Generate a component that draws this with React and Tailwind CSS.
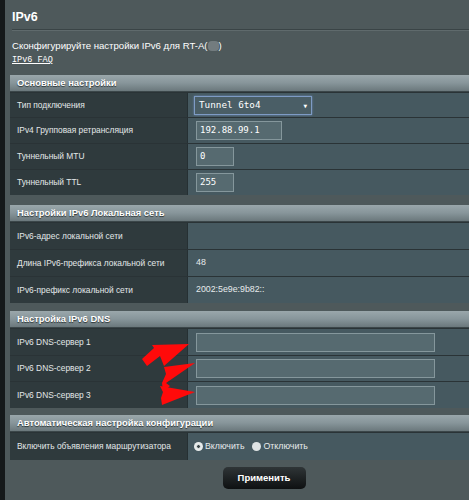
import React from "react";

const font = { fontFamily: '"Liberation Sans", Arial, sans-serif' };

function Header({ children }) {
  return (
    <div className="h-[17px] flex items-center pl-[7px] bg-gradient-to-b from-[#9aa7ab] via-[#87959a] to-[#6b787c] border-b border-[#3b4649] text-[9.4px] font-bold text-white whitespace-nowrap [text-shadow:0_1px_1px_#2a3335]">
      {children}
    </div>
  );
}

function Row({ label, children, h = "h-[26px]" }) {
  return (
    <div className={`flex ${h} border-t border-[#2a3336] first:border-t-0`}>
      <div className="w-[178px] shrink-0 bg-[#2f3a3d] flex items-center pl-[7px] text-[8.4px] text-[#e3e8e9] whitespace-nowrap border-r border-[#263033]">
        {label}
      </div>
      <div className="flex-1 bg-[#465960] flex items-center pl-[8px] text-[8.8px] text-[#e6ebec] whitespace-nowrap">
        {children}
      </div>
    </div>
  );
}

function Input({ w, value }) {
  return (
    <div className={`${w} h-[19px] border border-[#85979c] bg-[#566a70] flex items-center pl-[3px] text-[9px] text-white`} style={{ fontFamily: '"DejaVu Sans Mono", monospace' }}>
      {value}
    </div>
  );
}

export default function App() {
  return (
    <div className="w-[469px] h-[500px] overflow-hidden flex bg-[#4e595b] relative" style={font}>
      <div className="w-[5px] shrink-0 bg-[#15191a]" />
      <div className="flex-1 flex flex-col">
        <div className="pl-[7px] pt-[10px] h-[29px] text-[12.5px] font-bold text-white leading-[15px]">IPv6</div>
        <div className="ml-[7px] h-[2px] bg-[#3a4446] border-b border-[#5f6a6c]" />
        <div className="pl-[7px] mt-[8px] text-[9.6px] text-white leading-[14px] whitespace-nowrap">
          Сконфигурируйте настройки IPv6 для RT-A(<span className="inline-block w-[11px] h-[10px] bg-[#8c9598] align-middle rounded-sm opacity-60" />)
        </div>
        <div className="pl-[7px] text-[8.5px] text-white underline leading-[14px]" style={{ fontFamily: '"Liberation Mono", monospace' }}>IPv6 FAQ</div>

        <div className="ml-[5px] mt-[8px] flex flex-col">
          <Header>Основные настройки</Header>
          <Row label="Тип подключения" h="h-[25px]">
            <div className="w-[118px] h-[19px] -ml-[2px] border border-[#7e9bc4] bg-[#4a5e66] flex items-center justify-between px-[4px] text-[9.3px] text-white shadow-[0_0_2px_#6a8ab8]" style={{ fontFamily: '"DejaVu Sans Mono", monospace' }}>
              <span>Tunnel 6to4</span>
              <span className="text-[6px]">▼</span>
            </div>
          </Row>
          <Row label="IPv4 Групповая ретрансляция">
            <Input w="w-[86px]" value="192.88.99.1" />
          </Row>
          <Row label="Туннельный MTU">
            <Input w="w-[38px]" value="0" />
          </Row>
          <Row label="Туннельный TTL">
            <Input w="w-[38px]" value="255" />
          </Row>
        </div>

        <div className="ml-[5px] mt-[10px] flex flex-col">
          <Header>Настройки IPv6 Локальная сеть</Header>
          <Row label="IPv6-адрес локальной сети" h="h-[27px]" />
          <Row label="Длина IPv6-префикса локальной сети" h="h-[27px]">48</Row>
          <Row label="IPv6-префикс локальной сети" h="h-[27px]">2002:5e9e:9b82::</Row>
        </div>

        <div className="ml-[5px] mt-[8px] flex flex-col">
          <Header>Настройка IPv6 DNS</Header>
          <Row label="IPv6 DNS-сервер 1" h="h-[27px]"><Input w="w-[239px]" value="" /></Row>
          <Row label="IPv6 DNS-сервер 2"><Input w="w-[239px]" value="" /></Row>
          <Row label="IPv6 DNS-сервер 3" h="h-[27px]"><Input w="w-[239px]" value="" /></Row>
        </div>

        <div className="ml-[5px] mt-[7px] flex flex-col">
          <Header>Автоматическая настройка конфигурации</Header>
          <Row label="Включить объявления маршрутизатора" h="h-[28px]">
            <div className="flex items-center gap-[2px] -ml-[2px]">
              <span className="w-[9px] h-[9px] rounded-full bg-[#e8ecec] flex items-center justify-center">
                <span className="w-[5px] h-[5px] rounded-full bg-[#3a4548] border border-[#e8ecec]" />
              </span>
              <span className="mr-[6px]">Включить</span>
              <span className="w-[9px] h-[9px] rounded-full bg-[#dfe4e5]" />
              <span>Отключить</span>
            </div>
          </Row>
        </div>

        <div className="flex justify-center mt-[7px]">
          <div className="ml-[54px] w-[83px] h-[22px] rounded-[5px] bg-gradient-to-b from-[#2f3537] to-[#0e1112] flex items-center justify-center text-[9.5px] font-bold text-white">
            Применить
          </div>
        </div>
      </div>

      <svg className="absolute left-0 top-0 pointer-events-none" width="469" height="500">
        <polygon fill="#ff0a0a" points="142,359 154,348 152,345 189,344 164,366 160,356 147,366" />
        <polygon fill="#ff0a0a" points="162,383 166,374 164,367 195,363 166,383 170,386 163,392" />
        <polygon fill="#ff0a0a" points="160,386 195,392 162,405 161,398 163,392" />
      </svg>
    </div>
  );
}
